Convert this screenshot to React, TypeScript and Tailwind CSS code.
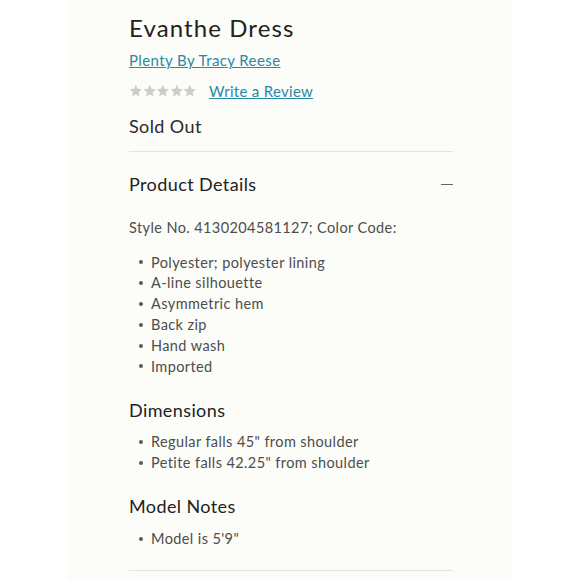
import React from 'react';

const font = { fontFamily: 'Lato, "Noto Sans", sans-serif' };

function Star() {
  return (
    <svg width="13.6" height="13.6" viewBox="0 0 24 24" className="fill-[#cccccc]">
      <path d="M12 1.5l3.1 7.1 7.7.7-5.8 5.1 1.7 7.6L12 18l-6.7 4 1.7-7.6-5.8-5.1 7.7-.7z" />
    </svg>
  );
}

function Bullets({ items }: { items: string[] }) {
  return (
    <ul>
      {items.map(item => (
        <li key={item} className="flex items-center h-[20.8px] text-[14.5px] text-[#4d4d4d] tracking-[0.4px]">
          <span className="w-[4px] h-[4px] rounded-full bg-[#595959] ml-[10px] mr-[8px]" />
          {item}
        </li>
      ))}
    </ul>
  );
}

export default function App() {
  return (
    <div className="w-[580px] h-[580px] bg-white flex justify-center overflow-hidden" style={font}>
      <div className="w-[446px] h-full bg-[#fcfcf8] pl-[62px]">
        <div className="w-[324px]">
          <h1 className="pt-[14px] text-[24px] leading-[28px] text-[#222] tracking-[1.1px]">Evanthe Dress</h1>
          <a className="block mt-2 text-[15px] leading-[20px] text-[#2a8aa6] underline tracking-[0.4px]">
            Plenty By Tracy Reese
          </a>
          <div className="flex items-center mt-[11px] h-[20px]">
            <div className="flex">
              <Star /><Star /><Star /><Star /><Star />
            </div>
            <a className="ml-[12px] text-[15px] leading-[20px] text-[#2a8aa6] underline tracking-[0.3px]">Write a Review</a>
          </div>
          <div className="mt-[13px] text-[18px] leading-[24px] text-[#2a2a2a] tracking-[0.4px]">Sold Out</div>
          <div className="mt-[13px] border-t border-[#e3e3df]" />

          <div className="mt-[20px] flex items-center justify-between h-[24px]">
            <h2 className="text-[18px] leading-[24px] text-[#222] tracking-[0.4px]">Product Details</h2>
            <span className="w-[12px] h-[1px] bg-[#666]" />
          </div>
          <p className="mt-[22px] text-[14.5px] leading-[20px] text-[#4d4d4d] tracking-[0.4px]">
            Style No. 4130204581127; Color Code:
          </p>
          <div className="mt-[14px]">
            <Bullets items={['Polyester; polyester lining', 'A-line silhouette', 'Asymmetric hem', 'Back zip', 'Hand wash', 'Imported']} />
          </div>

          <h2 className="mt-[21px] text-[18px] leading-[24px] text-[#222] tracking-[0.4px]">Dimensions</h2>
          <div className="mt-[10px]">
            <Bullets items={['Regular falls 45" from shoulder', 'Petite falls 42.25" from shoulder']} />
          </div>

          <h2 className="mt-[21px] text-[18px] leading-[24px] text-[#222] tracking-[0.4px]">Model Notes</h2>
          <div className="mt-[10px]">
            <Bullets items={['Model is 5\'9"']} />
          </div>
          <div className="mt-[21px] border-t border-[#e3e3df]" />
        </div>
      </div>
    </div>
  );
}
